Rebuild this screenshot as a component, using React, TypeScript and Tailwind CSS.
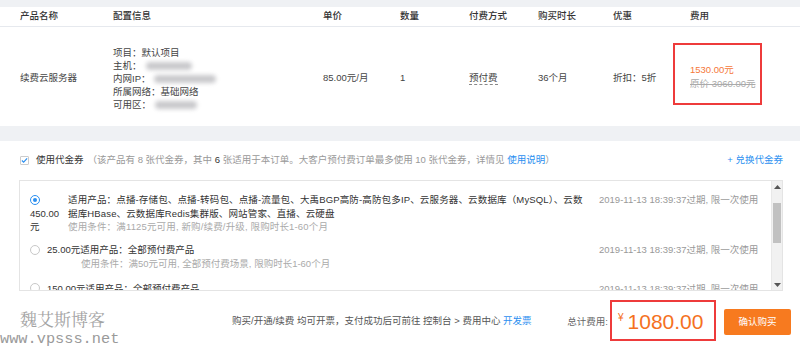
import React from 'react'

const blue = 'text-[#2b8ff0]'

function Blur({ w }: { w: number }) {
  return (
    <span
      className="inline-block h-[8px] bg-[#c9c9cc] blur-[2px] rounded-sm align-middle ml-[4px]"
      style={{ width: w }}
    />
  )
}

function Radio({ checked }: { checked?: boolean }) {
  return (
    <span
      className={
        'inline-flex items-center justify-center w-[10px] h-[10px] rounded-full border ' +
        (checked ? 'border-[#2b8ff0]' : 'border-[#c8c8c8]')
      }
    >
      {checked && <span className="w-[4px] h-[4px] rounded-full bg-[#2b8ff0]" />}
    </span>
  )
}

function Scrollbar() {
  return (
    <div className="w-[11px] shrink-0 flex flex-col bg-[#f1f1f1] border-l border-[#e8e8e8]">
      <div className="h-[11px] flex items-center justify-center">
        <svg width="7" height="4" viewBox="0 0 7 4">
          <path d="M0 4 L3.5 0 L7 4 Z" fill="#555" />
        </svg>
      </div>
      <div className="h-[11px]" />
      <div className="h-[40px] mx-[1px] bg-[#c1c1c1]" />
      <div className="flex-1" />
      <div className="h-[11px] flex items-center justify-center">
        <svg width="7" height="4" viewBox="0 0 7 4">
          <path d="M0 0 L3.5 4 L7 0 Z" fill="#555" />
        </svg>
      </div>
    </div>
  )
}

const expire = '2019-11-13 18:39:37过期, 限一次使用'

export default function App() {
  return (
    <div className="w-[800px] h-[348px] overflow-hidden bg-[#eff1f4] pt-[7px] text-[9.5px] text-[#333] font-['Liberation_Sans','Noto_Sans_CJK_SC',sans-serif]">
      {/* order table */}
      <div className="bg-white">
        <div className="flex items-center h-[20px] border-b border-[#e6e9ee] pl-[20px] text-[#333] font-medium">
          <div className="w-[93px]">产品名称</div>
          <div className="w-[210px]">配置信息</div>
          <div className="w-[77px]">单价</div>
          <div className="w-[69px]">数量</div>
          <div className="w-[69px]">付费方式</div>
          <div className="w-[75px]">购买时长</div>
          <div className="w-[60px]">优惠</div>
          <div className="pl-[17px]">费用</div>
        </div>
        <div className="flex items-center h-[99px] pl-[20px] text-[#444]">
          <div className="w-[93px] pt-[3px]">续费云服务器</div>
          <div className="w-[210px] leading-[13px] pt-[3px]">
            <div>项目：默认项目</div>
            <div>
              主机：<Blur w={46} />
            </div>
            <div>
              内网IP：<Blur w={62} />
            </div>
            <div>所属网络：基础网络</div>
            <div>
              可用区：<Blur w={42} />
            </div>
          </div>
          <div className="w-[77px] pt-[3px]">85.00元/月</div>
          <div className="w-[69px] pt-[3px]">1</div>
          <div className="w-[69px] pt-[3px]">
            <span className="border-b border-dashed border-[#888] pb-[1px]">预付费</span>
          </div>
          <div className="w-[75px] pt-[3px]">36个月</div>
          <div className="w-[60px] pt-[3px]">折扣：5折</div>
          <div className="w-[89px] h-[62px] mb-[5px] border-2 border-[#ee3b3b] flex flex-col justify-center pl-[15px] pt-[6px] leading-[14px]">
            <div className="text-[#f5783a]">1530.00元</div>
            <div className="text-[#aaa] line-through">原价 3060.00元</div>
          </div>
        </div>
      </div>

      {/* voucher section */}
      <div className="mt-[15px] bg-white h-[300px]">
        <div className="flex items-center h-[39px] px-[20px] pr-[17px]">
          <span className="w-[9px] h-[9px] border border-[#ccc] rounded-[1px] flex items-center justify-center mr-[7px]">
            <svg width="8" height="7" viewBox="0 0 8 7">
              <path d="M1 3.5 L3 5.5 L7 1" fill="none" stroke="#2b8ff0" strokeWidth="1.3" />
            </svg>
          </span>
          <span className="text-[#333]">使用代金券</span>
          <span className="text-[#999] ml-[4px]">
            （该产品有 8 张代金券，其中 <span className="text-[#333]">6</span> 张适用于本订单。大客户预付费订单最多使用 10 张代金券，详情见{' '}
            <span className={blue}>使用说明</span>）
          </span>
          <span className={'ml-auto ' + blue}>+ 兑换代金券</span>
        </div>

        <div className="mx-[19px] mr-[17px] h-[111px] border border-[#e4e4e4] flex overflow-hidden">
          <div className="flex-1 overflow-hidden pt-[12px] leading-[13.5px]">
            <div className="flex">
              <div className="w-[48px] shrink-0 pl-[10px] text-[#333]">
                <div className="h-[13.5px] flex items-center">
                  <Radio checked />
                </div>
                <div>450.00</div>
                <div>元</div>
              </div>
              <div className="w-[531px] shrink-0 text-[#333] whitespace-nowrap tracking-[0.15px]">
                <div>适用产品：点播-存储包、点播-转码包、点播-流量包、大禹BGP高防-高防包多IP、云服务器、云数据库（MySQL）、云数</div>
                <div>据库HBase、云数据库Redis集群版、网站管家、直播、云硬盘</div>
                <div className="text-[#aaa]">使用条件：满1125元可用, 新购/续费/升级, 限购时长1-60个月</div>
              </div>
              <div className="text-[#999] whitespace-nowrap">{expire}</div>
            </div>

            <div className="flex mt-[9.5px]">
              <div className="w-[27px] shrink-0 pl-[10px] h-[13.5px] flex items-center">
                <Radio />
              </div>
              <div className="w-[552px] shrink-0 text-[#333] whitespace-nowrap">
                <div>25.00元适用产品：全部预付费产品</div>
                <div className="text-[#aaa] pl-[34px]">使用条件：满50元可用, 全部预付费场景, 限购时长1-60个月</div>
              </div>
              <div className="text-[#999] whitespace-nowrap">{expire}</div>
            </div>

            <div className="flex mt-[11.5px]">
              <div className="w-[27px] shrink-0 pl-[10px] h-[13.5px] flex items-center">
                <Radio />
              </div>
              <div className="w-[552px] shrink-0 text-[#333] whitespace-nowrap">
                <div>150.00元适用产品：全部预付费产品</div>
              </div>
              <div className="text-[#999] whitespace-nowrap">{expire}</div>
            </div>
          </div>
          <Scrollbar />
        </div>

        {/* footer */}
        <div className="flex items-center h-[57px] pr-[9px]">
          <div className="w-[232px] self-end flex flex-col">
            <div className="pl-[20px] text-[17px] leading-[20px] text-[#a3a3a3] font-['Liberation_Serif','Noto_Serif_CJK_SC','Noto_Sans_CJK_SC',serif]">
              魏艾斯博客
            </div>
            <div className="text-[15.3px] leading-[17px] text-[#9a9a9a] font-['Liberation_Mono',monospace]">
              www.vpsss.net
            </div>
          </div>
          <div className="text-[#555] pt-[3px]">
            购买/开通/续费 均可开票，支付成功后可前往 控制台 &gt; 费用中心 <span className={blue}>开发票</span>
          </div>
          <div className="ml-auto text-[#666] pt-[5px] mr-[2px]">总计费用:</div>
          <div className="w-[106px] h-[41px] mt-[2px] border-2 border-[#ee3b3b] flex items-center pl-[6px] text-[#f5711e]">
            <span className="text-[10px] self-start mt-[8px] mr-[4px]">¥</span>
            <span className="text-[21px] leading-none pt-[2px]">1080.00</span>
          </div>
          <div className="ml-[8px] w-[67px] h-[26px] mt-[5px] rounded-[2px] bg-[#f77a1f] text-white flex items-center justify-center">
            确认购买
          </div>
        </div>
      </div>
    </div>
  )
}
